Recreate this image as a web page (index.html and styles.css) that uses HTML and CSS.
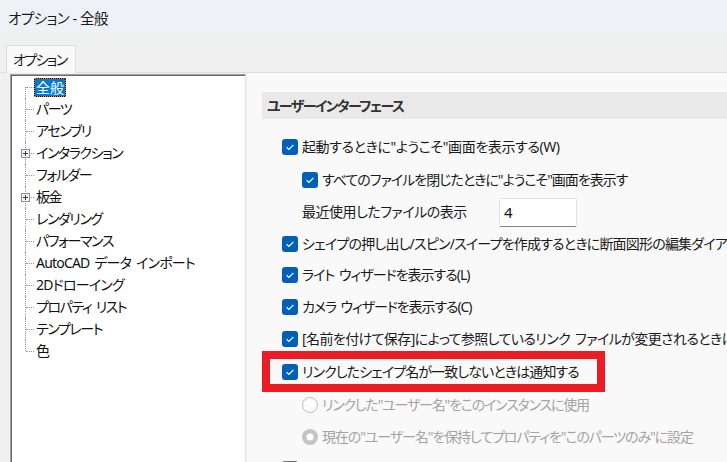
FILE: index.html
```html
<!DOCTYPE html>
<html lang="ja">
<head>
<meta charset="utf-8">
<title>オプション - 全般</title>
<link rel="stylesheet" href="styles.css">
</head>
<body>
<div class="titlebar">オプション - 全般</div>
<div class="tabstrip"><div class="tab">オプション</div></div>
<div class="main">
  <div class="tree">
    <ul class="nodes">
      <li class="node first"><span class="branch"></span><span class="label sel">全般</span></li>
      <li class="node"><span class="branch"></span><span class="label">パーツ</span></li>
      <li class="node"><span class="branch"></span><span class="label">アセンブリ</span></li>
      <li class="node"><span class="branch"><svg class="exp" width="9" height="9" viewBox="0 0 9 9"><rect x="0.5" y="0.5" width="8" height="8" fill="#f3f3f3" stroke="#919191"/><path d="M2 4.5h5M4.5 2v5" stroke="#1c3f94" stroke-width="1"/></svg></span><span class="label">インタラクション</span></li>
      <li class="node"><span class="branch"></span><span class="label">フォルダー</span></li>
      <li class="node"><span class="branch"><svg class="exp" width="9" height="9" viewBox="0 0 9 9"><rect x="0.5" y="0.5" width="8" height="8" fill="#f3f3f3" stroke="#919191"/><path d="M2 4.5h5M4.5 2v5" stroke="#1c3f94" stroke-width="1"/></svg></span><span class="label">板金</span></li>
      <li class="node"><span class="branch"></span><span class="label">レンダリング</span></li>
      <li class="node"><span class="branch"></span><span class="label">パフォーマンス</span></li>
      <li class="node"><span class="branch"></span><span class="label latin">AutoCAD データ インポート</span></li>
      <li class="node"><span class="branch"></span><span class="label latin">2Dドローイング</span></li>
      <li class="node"><span class="branch"></span><span class="label">プロパティ リスト</span></li>
      <li class="node"><span class="branch"></span><span class="label">テンプレート</span></li>
      <li class="node last"><span class="branch"></span><span class="label">色</span></li>
    </ul>
  </div>
  <div class="panel">
    <div class="section">ユーザーインターフェース</div>
    <div class="opts">
      <div class="row h33 ls4"><svg class="cb" width="16" height="16" viewBox="0 0 16 16"><rect width="16" height="16" rx="3" fill="#005fb8"/><path d="M4.6 8.3l2.3 2.2 4.5-4.6" fill="none" stroke="#fff" stroke-width="1.2"/></svg><span>起動するときに"ようこそ"画面を表示する(W)</span></div>
      <div class="row ind h33 ls10"><svg class="cb" width="16" height="16" viewBox="0 0 16 16"><rect width="16" height="16" rx="3" fill="#005fb8"/><path d="M4.6 8.3l2.3 2.2 4.5-4.6" fill="none" stroke="#fff" stroke-width="1.2"/></svg><span>すべてのファイルを閉じたときに"ようこそ"画面を表示す</span></div>
      <div class="row ind h32 ls5"><span class="fieldlabel">最近使用したファイルの表示</span><input class="num" type="text" value="4"></div>
      <div class="row h31 ls8"><svg class="cb" width="16" height="16" viewBox="0 0 16 16"><rect width="16" height="16" rx="3" fill="#005fb8"/><path d="M4.6 8.3l2.3 2.2 4.5-4.6" fill="none" stroke="#fff" stroke-width="1.2"/></svg><span>シェイプの押し出し/スピン/スイープを作成するときに断面図形の編集ダイアログを表示する</span></div>
      <div class="row h31 ls10"><svg class="cb" width="16" height="16" viewBox="0 0 16 16"><rect width="16" height="16" rx="3" fill="#005fb8"/><path d="M4.6 8.3l2.3 2.2 4.5-4.6" fill="none" stroke="#fff" stroke-width="1.2"/></svg><span>ライト ウィザードを表示する(L)</span></div>
      <div class="row h33 ls11"><svg class="cb" width="16" height="16" viewBox="0 0 16 16"><rect width="16" height="16" rx="3" fill="#005fb8"/><path d="M4.6 8.3l2.3 2.2 4.5-4.6" fill="none" stroke="#fff" stroke-width="1.2"/></svg><span>カメラ ウィザードを表示する(C)</span></div>
      <div class="row h31 ls6"><svg class="cb" width="16" height="16" viewBox="0 0 16 16"><rect width="16" height="16" rx="3" fill="#005fb8"/><path d="M4.6 8.3l2.3 2.2 4.5-4.6" fill="none" stroke="#fff" stroke-width="1.2"/></svg><span>[名前を付けて保存]によって参照しているリンク ファイルが変更されるときは通知する</span></div>
      <div class="row h35 ls9"><div class="hl"><svg class="cb" width="16" height="16" viewBox="0 0 16 16"><rect width="16" height="16" rx="3" fill="#005fb8"/><path d="M4.6 8.3l2.3 2.2 4.5-4.6" fill="none" stroke="#fff" stroke-width="1.2"/></svg><span>リンクしたシェイプ名が一致しないときは通知する</span></div></div>
      <div class="row ind h32 disabled ls12"><svg class="cb" width="16" height="16" viewBox="0 0 16 16"><circle cx="8" cy="8" r="7.5" fill="#fdfdfd" stroke="#bdbdbd"/></svg><span>リンクした"ユーザー名"をこのインスタンスに使用</span></div>
      <div class="row ind h31 disabled ls11"><svg class="cb" width="16" height="16" viewBox="0 0 16 16"><circle cx="8" cy="8" r="8" fill="#c4c4c4"/><circle cx="8" cy="8" r="3.5" fill="#fff"/></svg><span>現在の"ユーザー名"を保持してプロパティを"このパーツのみ"に設定</span></div>
      <div class="row h33"><svg class="cb" width="16" height="16" viewBox="0 0 16 16"><rect width="16" height="16" rx="3" fill="#6b6b6b"/></svg><span>　</span></div>
    </div>
  </div>
</div>
</body>
</html>
```

FILE: styles.css
```css
html, body {
  margin: 0;
  padding: 0;
}
body {
  width: 727px;
  height: 462px;
  overflow: hidden;
  background: #f0f0f0;
  font-family: "Noto Sans", "Noto Sans CJK JP", sans-serif;
  font-size: 14px;
  letter-spacing: -0.5px;
  word-spacing: 2px;
  line-height: 20px;
  font-feature-settings: "palt" 1;
  color: #1a1a1a;
}
.titlebar {
  height: 35px;
  background: #eef2f6;
  padding-left: 8px;
  display: flex;
  align-items: center;
  font-size: 14.5px;
  word-spacing: 0;
}
.tabstrip {
  height: 38px;
  box-sizing: border-box;
  padding-left: 6px;
  display: flex;
  align-items: flex-end;
  border-bottom: 1px solid #dedede;
}
.tab {
  height: 28px;
  box-sizing: border-box;
  margin-bottom: -1px;
  padding: 0 8px 0 6px;
  background: #f9f9f9;
  border: 1px solid #dedede;
  border-bottom: none;
  display: flex;
  align-items: center;
  letter-spacing: -1.6px;
}
.main {
  display: flex;
  height: 389px;
}
.tree {
  margin: 1px 0 0 10px;
  width: 236px;
  height: 400px;
  flex: none;
  box-sizing: border-box;
  background: #fff;
  border-top: 1px solid #a0a0a0;
  border-left: 1px solid #a0a0a0;
  border-right: 1px solid #e3e3e3;
  box-shadow: inset 1px 1px 0 #696969;
  padding: 1px 0 0 1px;
  letter-spacing: -1.4px;
}
.nodes {
  list-style: none;
  margin: 0;
  padding: 0;
}
.node {
  display: flex;
  align-items: center;
  height: 22px;
  white-space: nowrap;
  color: #111;
}
.branch {
  position: relative;
  width: 22px;
  height: 22px;
  flex: none;
}
.branch::before {
  content: "";
  position: absolute;
  left: 13px;
  top: 0;
  bottom: 0;
  border-left: 1px dotted #9a9a9a;
}
.first .branch::before { top: 11px; }
.last .branch::before { bottom: 11px; }
.branch::after {
  content: "";
  position: absolute;
  left: 14px;
  width: 8px;
  top: 11px;
  border-top: 1px dotted #9a9a9a;
}
.exp {
  position: absolute;
  left: 9px;
  top: 7px;
  z-index: 1;
}
.label {
  padding-left: 2px;
}
.label.latin {
  letter-spacing: -0.8px;
}
.label.sel {
  height: 19px;
  box-sizing: border-box;
  padding: 0 1px;
  line-height: 17px;
  letter-spacing: 0;
  color: #fff;
  border: 1px dotted #f08a1c;
  background: linear-gradient(#0078d7, #0078d7) padding-box, linear-gradient(#000, #000) border-box;
}
.panel {
  flex: 1;
  margin-left: 1px;
  min-width: 0;
  background: #f9f9f9;
  padding: 19px 0 0 15px;
  overflow: hidden;
}
.section {
  height: 27px;
  background: #e9e9e9;
  padding-left: 5px;
  font-weight: 700;
  letter-spacing: -1.6px;
  color: #333;
  display: flex;
  align-items: center;
}
.opts {
  margin-top: 11px;
}
.row {
  display: flex;
  align-items: center;
  padding-left: 20px;
  white-space: nowrap;
}
.row.ind { padding-left: 40px; }
.ls4 { letter-spacing: -0.4px; }
.ls5 { letter-spacing: -0.5px; }
.ls6 { letter-spacing: -0.6px; }
.ls8 { letter-spacing: -0.8px; }
.ls9 { letter-spacing: -0.9px; }
.ls10 { letter-spacing: -1px; }
.ls11 { letter-spacing: -1.1px; }
.ls12 { letter-spacing: -1.2px; }
.h31 { height: 31px; }
.h32 { height: 32px; }
.h33 { height: 33px; }
.h35 { height: 35px; }
.cb {
  flex: none;
  margin-right: 4px;
}
.fieldlabel {
  width: 197px;
  flex: none;
}
.num {
  width: 78px;
  height: 29px;
  box-sizing: border-box;
  margin: 0;
  padding: 0 0 0 4px;
  border: 1px solid #e3e3e3;
  border-bottom: 1px solid #868686;
  border-radius: 2px;
  background: #fff;
  font: inherit;
  font-size: 15px;
  color: #111;
}
.hl {
  display: flex;
  align-items: center;
  height: 25px;
  width: 327px;
  box-sizing: border-box;
  margin-left: -12px;
  padding-left: 12px;
  outline: 8px solid #ec1c24;
}
.disabled {
  color: #a3a3a3;
}
```
